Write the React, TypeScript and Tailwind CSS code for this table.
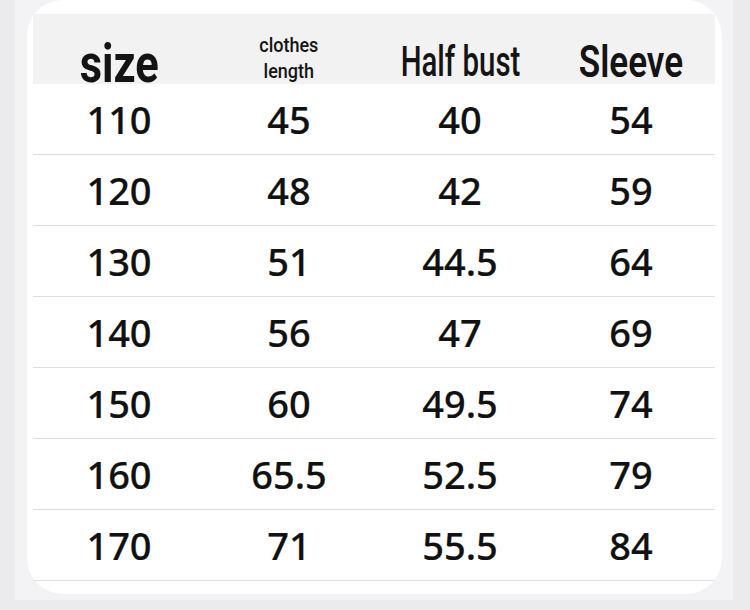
const rows = [
  ["110", "45", "40", "54"],
  ["120", "48", "42", "59"],
  ["130", "51", "44.5", "64"],
  ["140", "56", "47", "69"],
  ["150", "60", "49.5", "74"],
  ["160", "65.5", "52.5", "79"],
  ["170", "71", "55.5", "84"],
];

const cols = "grid grid-cols-[172px_168px_174px_168px]";

export default function App() {
  return (
    <div className="w-[750px] h-[610px] bg-[#ebebed] pl-[15px] overflow-hidden">
      {/* soft panel behind the card */}
      <div className="w-[718px] h-[600px] bg-[#f3f3f5] pl-[12px]">
        <div className="w-[695px] h-[594px] bg-white rounded-[36px] pl-[6px] pt-[14px]">
          <div className="w-[682px]">
            {/* header band */}
            <div
              className={`${cols} h-[70px] bg-[#f2f2f2] text-[#141414] font-['Roboto',sans-serif]`}
            >
              <div className="flex justify-center items-start">
                <span className="inline-block mt-[24px] text-[53px] leading-none font-bold scale-x-[0.82]">
                  size
                </span>
              </div>
              <div className="flex justify-center items-start">
                <span className="inline-block mt-[18px] text-[20px] leading-[26px] font-medium text-center scale-x-[0.9]">
                  clothes
                  <br />
                  length
                </span>
              </div>
              <div className="flex justify-center items-start">
                <span className="inline-block mt-[27px] text-[42px] leading-none font-medium whitespace-nowrap scale-x-[0.7]">
                  Half bust
                </span>
              </div>
              <div className="flex justify-center items-start">
                <span className="inline-block mt-[25px] text-[45px] leading-none font-semibold scale-x-[0.78]">
                  Sleeve
                </span>
              </div>
            </div>

            {/* data rows */}
            {rows.map((r) => (
              <div
                key={r[0]}
                className={`${cols} h-[71px] border-b-[1.5px] border-[#dedede] text-[#111] font-['Noto_Sans',sans-serif]`}
              >
                {r.map((v, i) => (
                  <div
                    key={i}
                    className="flex items-center justify-center text-[38px] leading-none font-medium [-webkit-text-stroke:0.2px_#111]"
                  >
                    {v}
                  </div>
                ))}
              </div>
            ))}
          </div>
        </div>
      </div>
    </div>
  );
}
